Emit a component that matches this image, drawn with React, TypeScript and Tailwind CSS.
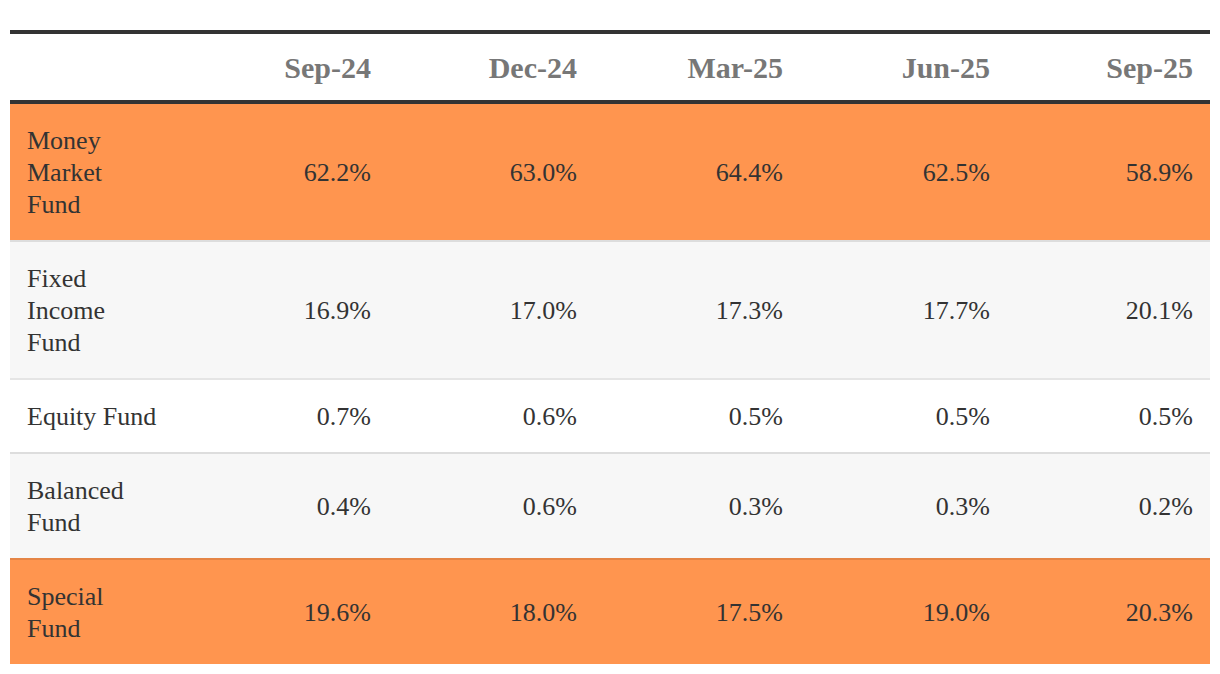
const periods = ["Sep-24", "Dec-24", "Mar-25", "Jun-25", "Sep-25"];

interface FundRow {
  name: string;
  values: string[];
  highlight?: boolean;
}

const rows: FundRow[] = [
  { name: "Money Market Fund", values: ["62.2%", "63.0%", "64.4%", "62.5%", "58.9%"], highlight: true },
  { name: "Fixed Income Fund", values: ["16.9%", "17.0%", "17.3%", "17.7%", "20.1%"] },
  { name: "Equity Fund", values: ["0.7%", "0.6%", "0.5%", "0.5%", "0.5%"] },
  { name: "Balanced Fund", values: ["0.4%", "0.6%", "0.3%", "0.3%", "0.2%"] },
  { name: "Special Fund", values: ["19.6%", "18.0%", "17.5%", "19.0%", "20.3%"], highlight: true },
];

export default function App() {
  return (
    <div className="min-h-[674px] bg-white pt-[30px] pl-[10px] font-['Liberation_Serif','Times_New_Roman',serif] text-[#333]">
      <table className="w-[1200px] table-fixed border-separate border-spacing-0">
        <colgroup>
          <col className="w-[171px]" />
          <col className="w-[207px]" />
          <col className="w-[206px]" />
          <col className="w-[206px]" />
          <col className="w-[207px]" />
          <col className="w-[203px]" />
        </colgroup>
        <thead>
          <tr>
            <th className="border-t-4 border-b-4 border-[#333]" />
            {periods.map((p) => (
              <th
                key={p}
                className="border-t-4 border-b-4 border-[#333] px-[17px] pt-[16px] pb-[14px] text-right text-[30px] leading-[36px] font-bold text-[#777]"
              >
                {p}
              </th>
            ))}
          </tr>
        </thead>
        <tbody>
          {rows.map((row, i) => {
            const bg = row.highlight
              ? "bg-[#ff954f]"
              : i % 2 === 1
              ? "bg-[#f7f7f7]"
              : "bg-white";
            const border = i === 0 ? "" : "border-t-2 border-black/10";
            return (
              <tr key={row.name} className={bg}>
                <td className={`${border} pl-[17px] pr-[22px] pt-[21px] pb-[19px] text-left align-middle text-[26px] leading-[32px]`}>
                  {row.name}
                </td>
                {row.values.map((v, j) => (
                  <td
                    key={j}
                    className={`${border} px-[17px] pt-[21px] pb-[19px] text-right align-middle text-[26px] leading-[32px]`}
                  >
                    {v}
                  </td>
                ))}
              </tr>
            );
          })}
        </tbody>
      </table>
    </div>
  );
}
